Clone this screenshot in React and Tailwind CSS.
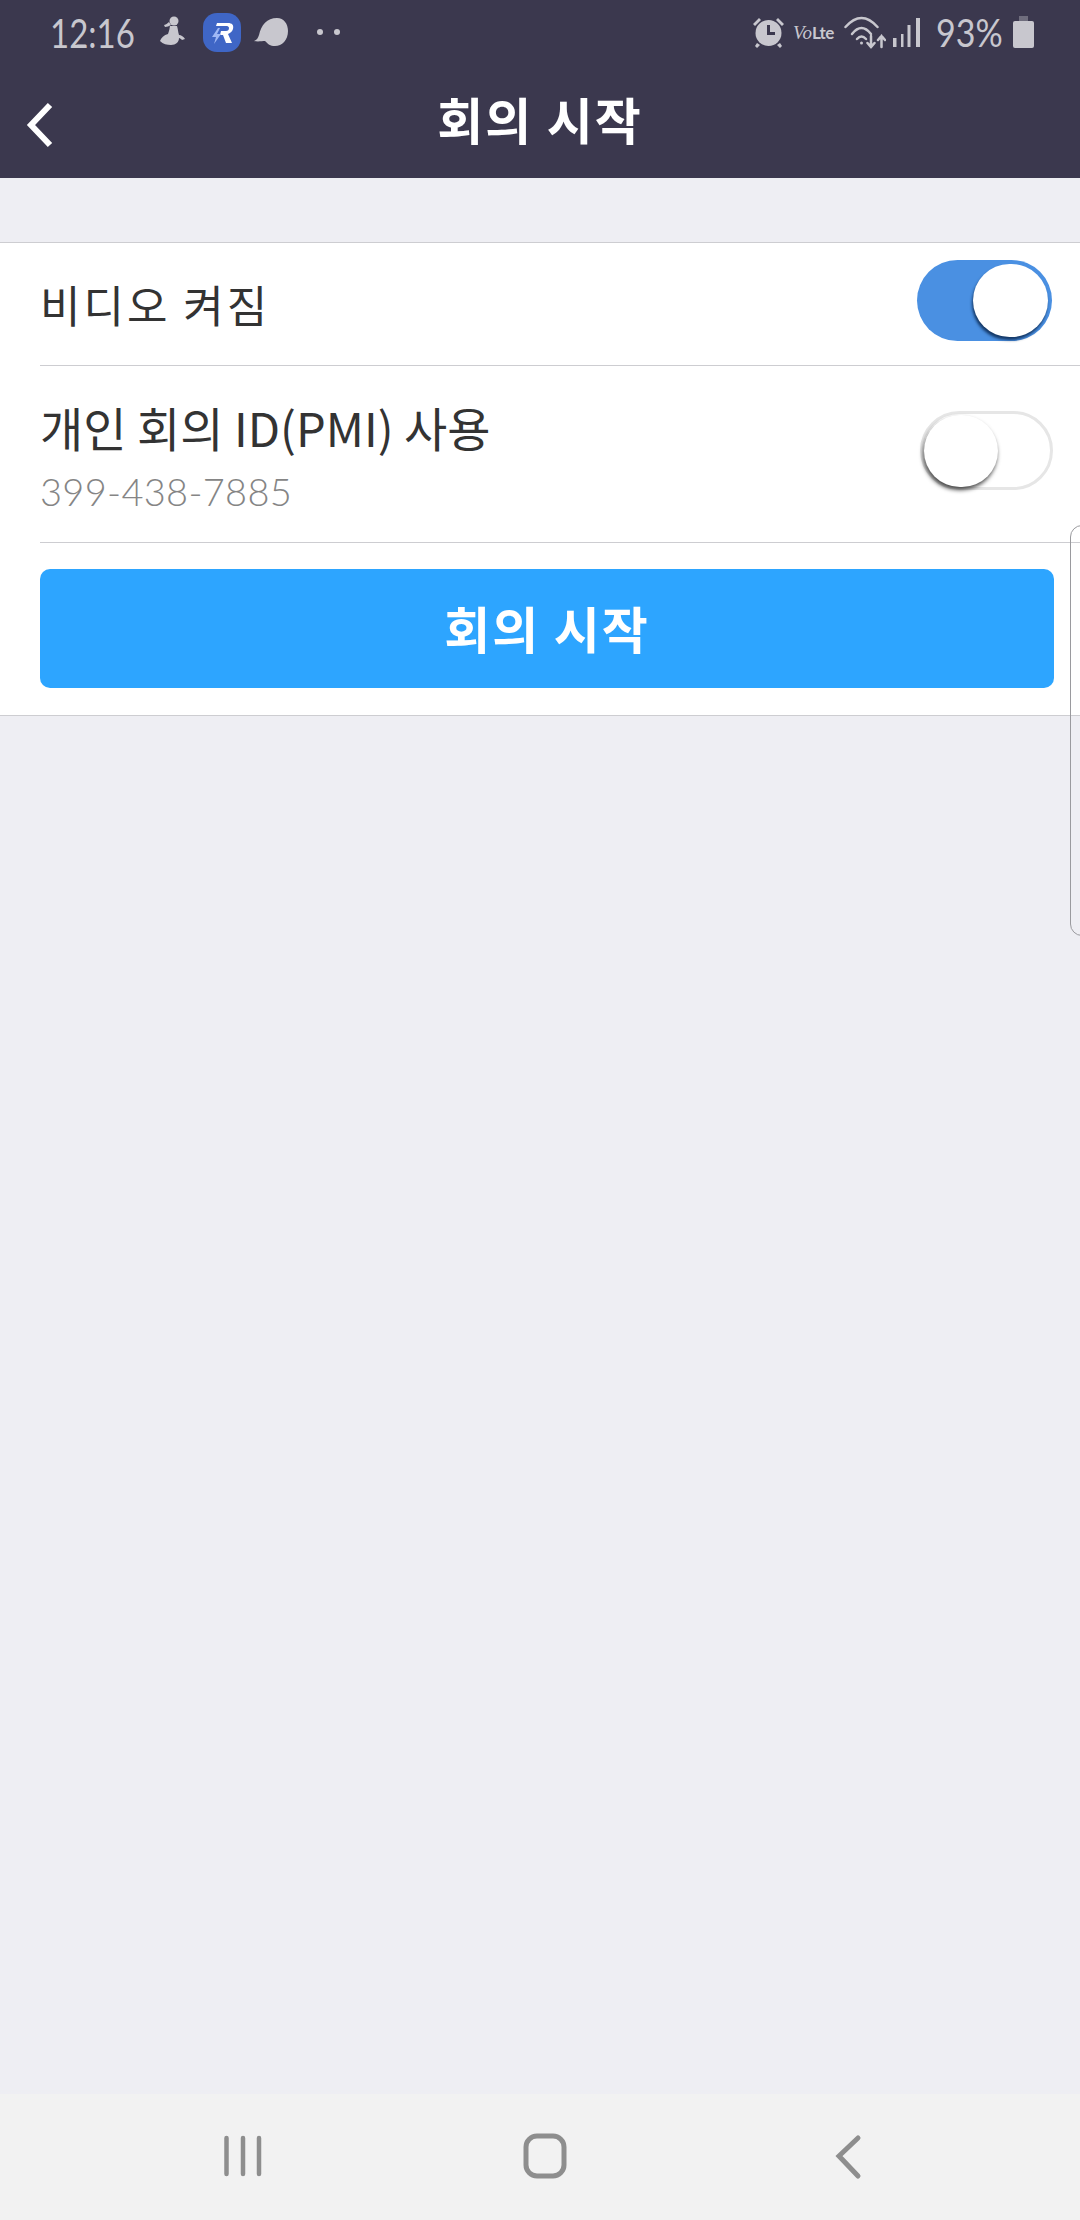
const krFont = "font-['Noto_Sans_CJK_KR',sans-serif]";

function Walker() {
  return (
    <svg width="27" height="32" viewBox="0 0 27 32" className="ml-[27px]" fill="#c8c7ce">
      <circle cx="15" cy="5" r="4.500" />
      <path d="M10 6c-2 2-4 3-5 3l1 2c2 0 4-1 6-2z" />
      <path d="M11 10h7c1 3 1 6 2 9 2 0 5 2 6 4l-3 1c-1-1-2-2-3-2 0 4-3 7-8 7-4 0-8-1-11-4 1-3 4-6 8-7 1-3 2-6 2-10z" />
    </svg>
  );
}

function RBadge() {
  return (
    <svg width="38" height="39" viewBox="0 0 38 39" className="ml-[17px]">
      <rect x="0" y="0" width="38" height="39" rx="14" fill="#3f66c6" />
      <path d="M14 10h11c4 0 6 2 5 6-1 3-3 4-5 5l4 9h-6l-3-8h-3l1-4h5c2 0 3-1 3-3 0-1-1-2-2-2h-11z" fill="#fff" />
      <path d="M15 15l-6 9h4l-2 7 7-10h-4l3-6z" fill="#9fb8f5" />
    </svg>
  );
}

function Bubble() {
  return (
    <svg width="34" height="30" viewBox="0 0 34 30" className="ml-[13px]" fill="#c8c7ce">
      <path d="M0 24c3-1 4-3 5-6C7 8 13 1 23 1c7 0 11 6 11 13 0 9-6 15-13 15-5 0-7-2-10-5-3 0-7 1-11 0z" />
    </svg>
  );
}

function Alarm() {
  return (
    <svg width="33" height="33" viewBox="0 0 33 33">
      <circle cx="16.500" cy="17" r="13" fill="#c8c7ce" />
      <path d="M15 9v10h8v-3h-5V9z" fill="#3b384e" />
      <path d="M1 8l6-6 2 2-6 6zM32 8l-6-6-2 2 6 6zM5 27l3 2-3 3-2-2zM28 27l-3 2 3 3 2-2z" fill="#c8c7ce" />
    </svg>
  );
}

function Wifi() {
  return (
    <svg width="42" height="33" viewBox="0 0 42 33" fill="none" stroke="#c8c7ce" strokeWidth="2.500" strokeLinecap="round">
      <path d="M1.500 11Q17.500 -7 33.500 11" />
      <path d="M8 18Q17.500 6 27 18" />
      <path d="M13 23Q17.500 18 22 23" />
      <circle cx="17.500" cy="27" r="1.500" fill="#c8c7ce" stroke="none" />
      <path d="M27 20v11M23.500 27l3.500 4 3.500-4M37.500 31V20M34 24l3.500-4 3.500 4" />
    </svg>
  );
}

function Signal() {
  return (
    <svg width="28" height="30" viewBox="0 0 28 30" fill="#c8c7ce">
      <rect x="0" y="21" width="3.500" height="9" />
      <rect x="8" y="17" width="2.500" height="13" />
      <rect x="14.500" y="8" width="3" height="22" />
      <rect x="23" y="1" width="4" height="29" />
    </svg>
  );
}

function Battery() {
  return (
    <svg width="21" height="32" viewBox="0 0 21 32" fill="#c8c7ce">
      <rect x="6" y="0" width="9" height="6" fill="#6f6d7d" />
      <rect x="0" y="5" width="21" height="27" rx="2" />
    </svg>
  );
}

function Toggle({ on }) {
  if (on) {
    return (
      <div className="relative mb-[7px] w-[135px] h-[81px] rounded-full bg-[#4a90e2]">
        <div className="absolute left-[56px] top-[4px] w-[75px] h-[73px] rounded-full bg-white shadow-[-1px_3px_3px_rgba(10,40,80,0.85)]" />
      </div>
    );
  }
  return (
    <div className="relative mb-[7px] w-[133px] h-[79px] rounded-full bg-white border-[3px] border-[#e6e6e6]">
      <div className="absolute left-[1px] top-[1px] w-[74px] h-[72px] rounded-full bg-white shadow-[-1px_3px_4px_rgba(0,0,0,0.7)]" />
    </div>
  );
}

export default function App() {
  return (
    <div className={`relative flex flex-col w-[1080px] h-[2220px] overflow-hidden bg-[#eeeef3] ${krFont}`}>
      <div className="bg-[#3b384e] h-[178px] shrink-0">
        <div className="flex items-center h-[64px] pl-[50px] pr-[46px]">
          <span className="font-['Lato',sans-serif] font-normal text-[33px] leading-none text-[#c8c7ce] w-[82px] scale-y-[1.2] origin-center">12:16</span>
          <Walker />
          <RBadge />
          <Bubble />
          <div className="flex gap-[11px] ml-[29px]">
            <div className="w-[6px] h-[6px] rounded-full bg-[#c8c7ce]" />
            <div className="w-[6px] h-[6px] rounded-full bg-[#c8c7ce]" />
          </div>
          <div className="flex items-center ml-auto">
            <Alarm />
            <span className="ml-[8px] w-[41px] flex items-baseline leading-none text-[#c8c7ce]">
              <span className="font-['Liberation_Serif',serif] italic text-[19px]">Vo</span>
              <span className="font-['Lato',sans-serif] font-bold text-[17px] tracking-[-0.5px]">Lte</span>
            </span>
            <div className="ml-[10px]"><Wifi /></div>
            <div className="ml-[7px]"><Signal /></div>
            <span className="ml-[15px] w-[68px] font-['Lato',sans-serif] font-normal text-[34px] leading-none text-[#c8c7ce] scale-y-[1.15] origin-center">93%</span>
            <div className="ml-[9px]"><Battery /></div>
          </div>
        </div>
        <div className="relative flex items-center justify-center h-[114px] pb-[6px]">
          <svg width="30" height="48" viewBox="0 0 30 48" className="absolute left-[25px] top-[37px]" fill="none" stroke="#fff" strokeWidth="6">
            <path d="M25 4L6 24l19 20" />
          </svg>
          <span className="text-[50px] leading-none font-bold text-white tracking-[2px]">회의 시작</span>
        </div>
      </div>

      <div className="mt-[64px] bg-white border-y border-[#cdcdd1]">
        <div className="flex items-center justify-between h-[122px] pl-[40px] pr-[28px]">
          <span className="text-[44px] leading-none tracking-[3px] text-[#333333] pb-[1px]">비디오 켜짐</span>
          <Toggle on />
        </div>
        <div className="ml-[40px] border-t border-[#cdcdd1] flex items-center justify-between h-[177px] pr-[27px]">
          <div className="flex flex-col gap-[22px] pt-[5px]">
            <span className="text-[47px] leading-none text-[#333333]">개인 회의 ID(PMI) 사용</span>
            <span className="font-['Lato',sans-serif] font-light text-[38px] leading-none tracking-[0.3px] text-[#858585]">399-438-7885</span>
          </div>
          <Toggle />
        </div>
        <div className="ml-[40px] border-t border-[#cdcdd1] pt-[26px] pb-[27px] pr-[26px]">
          <div className="flex items-center justify-center h-[119px] pb-[4px] rounded-[10px] bg-[#2da5ff]">
            <span className="text-[50px] leading-none font-bold text-white tracking-[2px]">회의 시작</span>
          </div>
        </div>
      </div>

      <div className="flex-1" />

      <div className="flex items-center h-[126px] shrink-0 bg-[#f2f2f2]">
        <svg width="1080" height="126" viewBox="0 0 1080 126" fill="none" stroke="#8e8e8e" strokeLinecap="round">
          <path d="M226.500 44v36M243 44v36M259 44v36" strokeWidth="4.500" />
          <rect x="526" y="42" width="38" height="40" rx="11" strokeWidth="5" />
          <path d="M858 44L839 62l19 20" strokeWidth="5" />
        </svg>
      </div>

      <div className="absolute left-[1070px] top-[525px] w-[20px] h-[411px] rounded-l-[12px] border border-[#9a9a9e] bg-transparent" />
    </div>
  );
}
